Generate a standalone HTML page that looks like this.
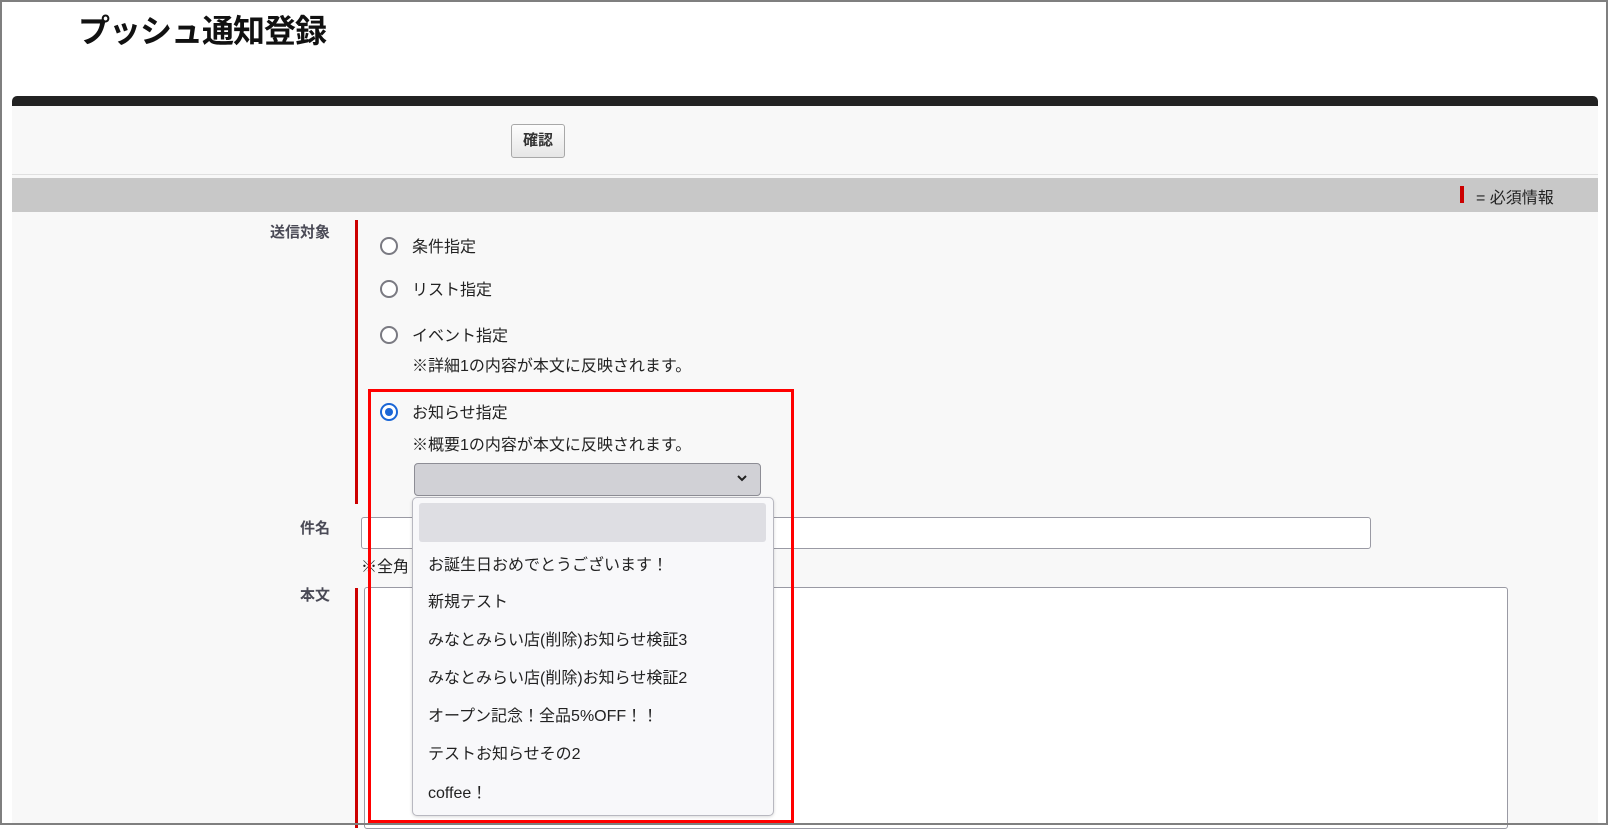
<!DOCTYPE html>
<html><head><meta charset="utf-8"><style>
body{margin:0;width:1608px;height:825px;overflow:hidden;background:#fff;position:relative;font-family:"Liberation Sans","Noto Sans CJK JP",sans-serif;color:#222}
.a{position:absolute}
.frame{left:0;top:0;width:1604px;height:821px;border:2px solid #7f7f7f}
.lbl{font-weight:bold;color:#4a4a56;font-size:15px;text-align:right;width:120px;left:210px}
.radio{width:14px;height:14px;border:2px solid #7a7a82;border-radius:50%;background:#fff}
.t{font-size:16px;color:#222;white-space:nowrap}
.opt{left:428px;font-size:16px;color:#222;white-space:nowrap}
</style></head><body>
<div class="a" style="left:78px;top:6px;font-size:32px;color:#111;letter-spacing:-1px;font-weight:bold">プッシュ通知登録</div>
<div class="a" style="left:12px;top:96px;width:1586px;height:10px;background:#222;border-radius:5px 5px 0 0"></div>
<div class="a" style="left:12px;top:106px;width:1586px;height:719px;background:#f8f8f8"></div>
<div class="a" style="left:511px;top:124px;width:52px;height:32px;border:1px solid #a8a8a8;border-radius:3px;background:linear-gradient(#fdfdfd,#e6e6e6);font-size:15px;font-weight:bold;text-align:center;line-height:32px;color:#333">確認</div>
<div class="a" style="left:12px;top:174px;width:1586px;height:1px;background:#e0e0e0"></div>
<div class="a" style="left:12px;top:178px;width:1586px;height:34px;background:#c8c8c8"></div>
<div class="a" style="left:1460px;top:186px;width:4px;height:17px;background:#c00"></div>
<div class="a" style="left:1476px;top:184px;font-size:16px;color:#222">= 必須情報</div>
<div class="a lbl" style="top:221px">送信対象</div>
<div class="a" style="left:355px;top:220px;width:3px;height:284px;background:#c00"></div>
<div class="a radio" style="left:380px;top:237px"></div><div class="a t" style="left:412px;top:233px">条件指定</div>
<div class="a radio" style="left:380px;top:280px"></div><div class="a t" style="left:412px;top:276px">リスト指定</div>
<div class="a radio" style="left:380px;top:326px"></div><div class="a t" style="left:412px;top:322px">イベント指定</div>
<div class="a t" style="left:412px;top:352px">※詳細1の内容が本文に反映されます。</div>
<div class="a radio" style="left:380px;top:403px;border-color:#1a66d6"><div style="margin:3px;width:8px;height:8px;border-radius:50%;background:#1a66d6"></div></div>
<div class="a t" style="left:412px;top:399px">お知らせ指定</div>
<div class="a t" style="left:412px;top:431px">※概要1の内容が本文に反映されます。</div>
<div class="a" style="left:414px;top:463px;width:345px;height:31px;background:#d1d1d6;border:1px solid #8d8d95;border-radius:4px"></div>
<svg class="a" style="left:736px;top:474px" width="12" height="10"><path d="M2 2l4 4 4-4" stroke="#222" stroke-width="2" fill="none"/></svg>
<div class="a lbl" style="top:517px">件名</div>
<div class="a" style="left:361px;top:517px;width:1008px;height:30px;background:#fff;border:1px solid #9a9aa4;border-radius:3px"></div>
<div class="a t" style="left:361px;top:553px">※全角</div>
<div class="a lbl" style="top:584px">本文</div>
<div class="a" style="left:355px;top:588px;width:3px;height:240px;background:#c00"></div>
<div class="a" style="left:364px;top:587px;width:1142px;height:240px;background:#fff;border:1px solid #9a9aa4;border-radius:3px"></div>
<div class="a" style="left:412px;top:497px;width:360px;height:317px;background:#f8f8fa;border:1px solid #b8b8c0;border-radius:5px;box-shadow:0 1px 3px rgba(0,0,0,.15)"></div>
<div class="a" style="left:419px;top:503px;width:347px;height:39px;background:#dedee3;border-radius:3px"></div>
<div class="a opt" style="top:551px">お誕生日おめでとうございます！</div>
<div class="a opt" style="top:588px">新規テスト</div>
<div class="a opt" style="top:626px">みなとみらい店(削除)お知らせ検証3</div>
<div class="a opt" style="top:664px">みなとみらい店(削除)お知らせ検証2</div>
<div class="a opt" style="top:702px">オープン記念！全品5%OFF！！</div>
<div class="a opt" style="top:740px">テストお知らせその2</div>
<div class="a opt" style="top:779px">coffee！</div>
<div class="a" style="left:368px;top:389px;width:420px;height:428px;border:3px solid #f00"></div>
<div class="a frame"></div>
</body></html>
